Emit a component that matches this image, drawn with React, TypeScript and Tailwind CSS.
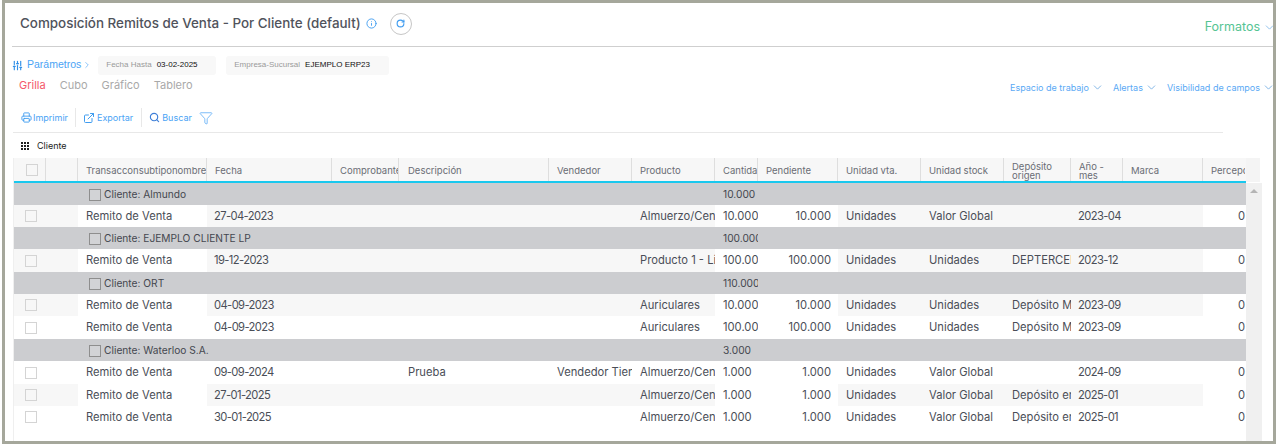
import React from "react";
import { ChevronDown, Info, RotateCw, SlidersVertical, Printer, ExternalLink, Search, Filter, ChevronRight } from "lucide-react";

const rowCols =
  "grid grid-cols-[32px_32px_129px_125px_67px_150px_83px_83px_43px_80px_83px_83px_67px_52px_80px_42px]";

type Row = {
  kind: "group" | "item";
  label?: string;
  total?: string;
  cells?: string[];
  shade?: boolean;
  h: string;
};

const rows: Row[] = [
  { kind: "group", label: "Cliente: Almundo", total: "10.000", h: "h-[22px]" },
  { kind: "item", shade: true, h: "h-[22px]", cells: ["27-04-2023", "", "", "", "Almuerzo/Cena", "10.000", "10.000", "Unidades", "Valor Global", "", "2023-04"] },
  { kind: "group", label: "Cliente: EJEMPLO CLIENTE LP", total: "100.000", h: "h-[22px]" },
  { kind: "item", shade: true, h: "h-[23px]", cells: ["19-12-2023", "", "", "", "Producto 1 - Licencia", "100.000", "100.000", "Unidades", "Unidades", "DEPTERCERO", "2023-12"] },
  { kind: "group", label: "Cliente: ORT", total: "110.000", h: "h-[22px]" },
  { kind: "item", shade: true, h: "h-[22px]", cells: ["04-09-2023", "", "", "", "Auriculares", "10.000", "10.000", "Unidades", "Unidades", "Depósito Mayor", "2023-09"] },
  { kind: "item", h: "h-[23px]", cells: ["04-09-2023", "", "", "", "Auriculares", "100.000", "100.000", "Unidades", "Unidades", "Depósito Mayor", "2023-09"] },
  { kind: "group", label: "Cliente: Waterloo S.A.", total: "3.000", h: "h-[22px]" },
  { kind: "item", h: "h-[23px]", cells: ["09-09-2024", "", "Prueba", "Vendedor Tienda", "Almuerzo/Cena", "1.000", "1.000", "Unidades", "Valor Global", "", "2024-09"] },
  { kind: "item", shade: true, h: "h-[22px]", cells: ["27-01-2025", "", "", "", "Almuerzo/Cena", "1.000", "1.000", "Unidades", "Valor Global", "Depósito en", "2025-01"] },
  { kind: "item", h: "h-[22px]", cells: ["30-01-2025", "", "", "", "Almuerzo/Cena", "1.000", "1.000", "Unidades", "Valor Global", "Depósito en", "2025-01"] },
];

const headers = [
  "Transacconsubtiponombre",
  "Fecha",
  "Comprobante",
  "Descripción",
  "Vendedor",
  "Producto",
  "Cantidad",
  "Pendiente",
  "Unidad vta.",
  "Unidad stock",
  "Depósito origen",
  "Año - mes",
  "Marca",
  "Percepciones",
];

function GroupRow({ row }: { row: Row }) {
  return (
    <div className={rowCols + " bg-[#cccdd0] items-center pt-[2px] text-[10.2px] text-[#44474f] " + row.h}>
      <span className="col-span-2" />
      <div className="col-span-6 flex items-center gap-[3px] pl-[11px]">
        <span className="block size-[12px] border border-[#8e8e8e] bg-[#d2d3d6]" />
        <span>{row.label}</span>
      </div>
      <span className="pl-[8px] overflow-hidden whitespace-nowrap">{row.total}</span>
    </div>
  );
}

function ItemRow({ row }: { row: Row }) {
  const cells = row.cells ?? [];
  const shade = row.shade ? "bg-[#f7f7f7]" : "";
  return (
    <div className={rowCols + " items-stretch text-[11.2px] text-[#4a4e57] " + row.h}>
      <div className={"col-span-2 flex items-center pl-[11px] " + shade}>
        <span className="block size-[12px] border border-[#d4d4d4]" />
      </div>
      <div className="pl-[8px] flex items-center whitespace-nowrap">Remito de Venta</div>
      {cells.map((c, i) => {
        let pad = "pl-[8px] ";
        if (i === 6) pad = "justify-end pr-[7px] ";
        if (i === 2) pad = "pl-[9px] ";
        if (i === 0 || i === 10) pad = "pl-[7px] tracking-[-0.6px] ";
        const bg = i === 5 || i === 6 ? "" : shade;
        return (
          <div key={i} className={"flex items-center overflow-hidden whitespace-nowrap " + pad + bg}>
            {c}
          </div>
        );
      })}
      <div className={shade} />
      <div className="flex items-center justify-end text-right">0</div>
    </div>
  );
}

function GridDots() {
  return (
    <svg width="8" height="8" viewBox="0 0 8 8" fill="#222">
      <rect x="0" y="0" width="2" height="2" />
      <rect x="3" y="0" width="2" height="2" />
      <rect x="6" y="0" width="2" height="2" />
      <rect x="0" y="3" width="2" height="2" />
      <rect x="3" y="3" width="2" height="2" />
      <rect x="6" y="3" width="2" height="2" />
      <rect x="0" y="6" width="2" height="2" />
      <rect x="3" y="6" width="2" height="2" />
      <rect x="6" y="6" width="2" height="2" />
    </svg>
  );
}

export default function App() {
  return (
    <div className="h-[446px] w-[1278px] bg-white pl-[2px] pr-[2px] font-['Inter',sans-serif]">
      <div className="h-[444px] w-[1274px] border-[3px] border-[#a5a79b] bg-white overflow-hidden">
        <div className="flex h-[44px] items-center justify-between border-b border-[#cfcfcf] ml-[7px] pb-[2px]">
          <div className="flex items-center">
            <h1 className="ml-[8px] text-[13.4px] font-medium text-[#50535c] whitespace-nowrap">
              Composición Remitos de Venta - Por Cliente (default)
            </h1>
            <Info className="ml-[5px] size-[11px] text-[#3f9cf0]" />
            <span className="ml-[13px] flex size-[22px] items-center justify-center rounded-full border border-[#c6c6c6]">
              <RotateCw className="size-[9px] text-[#3f9cf0]" strokeWidth={3} />
            </span>
          </div>
          <div className="flex items-center gap-[3px] mr-[-3px] pt-[8px] text-[12.5px] text-[#55c493]">
            Formatos
            <ChevronDown className="size-[13px] text-[#7db5e8]" strokeWidth={1.5} />
          </div>
        </div>

        <div className="flex h-[24px] items-center ml-[7px] mt-[6px] font-['Liberation_Sans',sans-serif]">
          <SlidersVertical className="size-[11px] text-[#2f8fe8]" strokeWidth={2.5} />
          <span className="ml-[4px] text-[10.5px] text-[#4aa3f5]">Parámetros</span>
          <ChevronRight className="size-[10px] text-[#4aa3f5] ml-[1px]" strokeWidth={1.5} />
          <div className="ml-[6px] flex h-[19px] w-[118px] items-center gap-[5px] rounded-[3px] bg-[#f8f8f8] pl-[8px] text-[8px]">
            <span className="text-[#9a9a9a]">Fecha Hasta</span>
            <span className="text-[#111]">03-02-2025</span>
          </div>
          <div className="ml-[10px] flex h-[19px] w-[163px] items-center gap-[5px] rounded-[3px] bg-[#f8f8f8] pl-[8px] text-[8px]">
            <span className="text-[#9a9a9a]">Empresa-Sucursal</span>
            <span className="text-[#111]">EJEMPLO ERP23</span>
          </div>
        </div>

        <div className="flex h-[22px] items-start justify-between ml-[14px]">
          <div className="flex gap-[14px] text-[11px] text-[#a9a9a9]">
            <span className="text-[#f4586b]">Grilla</span>
            <span>Cubo</span>
            <span>Gráfico</span>
            <span>Tablero</span>
          </div>
          <div className="flex items-center text-[9px] text-[#5aa9f5] pt-[4px] mr-[-2px]">
            Espacio de trabajo
            <ChevronDown className="ml-[2px] size-[13px] text-[#6aa8e0]" strokeWidth={1.5} />
            <span className="ml-[9px]">Alertas</span>
            <ChevronDown className="ml-[2px] size-[13px] text-[#6aa8e0]" strokeWidth={1.5} />
            <span className="ml-[9px]">Visibilidad de campos</span>
            <ChevronDown className="ml-[2px] size-[13px] text-[#6aa8e0]" strokeWidth={1.5} />
          </div>
        </div>

        <div className="flex h-[27px] mt-[6px] pb-[2px] items-center ml-[16px] text-[9px] text-[#4aa3f5]">
          <Printer className="size-[11px] text-[#3f9cf0]" />
          <span className="ml-[1px]">Imprimir</span>
          <span className="ml-[7px] h-[19px] w-px bg-[#e8e8e8]" />
          <ExternalLink className="ml-[7px] size-[12px] text-[#3f9cf0]" />
          <span className="ml-[2px]">Exportar</span>
          <span className="ml-[8px] h-[19px] w-px bg-[#e8e8e8]" />
          <Search className="ml-[7px] size-[11px] text-[#3f7fd8]" strokeWidth={2.5} />
          <span className="ml-[2px]">Buscar</span>
          <Filter className="ml-[7px] size-[14px] text-[#4aa3f5]" strokeWidth={1.25} />
        </div>

        <div className="ml-[8px] w-[1210px] border-t border-[#e8e8e8] h-[26px] flex items-center pl-[8px] text-[9px] text-[#222]">
          <GridDots />
          <span className="ml-[8px]">Cliente</span>
        </div>

        <div className="ml-[8px] flex w-[1249px] h-[290px] border-l border-[#efefef]">
          <div className="w-[1232px]">
            <div className={rowCols + " h-[23px] border-b-2 border-[#19c8ee] bg-[#f7f7f7] text-[9.5px] text-[#6a6d75] box-content"}>
              <div className="flex items-center border-r border-[#dedede] pl-[12px]">
                <span className="block size-[12px] border border-[#d4d4d4]" />
              </div>
              <div className="border-r border-[#dedede]" />
              {headers.map((h) => (
                <div
                  key={h}
                  className={
                    "flex items-center overflow-hidden border-r border-[#dedede] pt-[2px] leading-[9px] last:border-r-0 " +
                    (h === "Descripción" ? "pl-[9px]" : "pl-[8px]")
                  }
                >
                  <span className={h === "Depósito origen" || h === "Año - mes" ? "" : "whitespace-nowrap"}>{h}</span>
                </div>
              ))}
            </div>
            {rows.map((r, i) =>
              r.kind === "group" ? <GroupRow key={i} row={r} /> : <ItemRow key={i} row={r} />
            )}
          </div>
          <div className="w-[16px] bg-[#f0f0f0] flex flex-col items-center">
            <div className="h-[25px] w-full bg-white">
              <div className="h-[24px] w-[14px] bg-[#f4f4f4]" />
            </div>
            <span className="mt-[6px] h-0 w-0 border-x-[4px] border-b-[4px] border-x-transparent border-b-[#b5b5b5]" />
          </div>
        </div>
      </div>
    </div>
  );
}
